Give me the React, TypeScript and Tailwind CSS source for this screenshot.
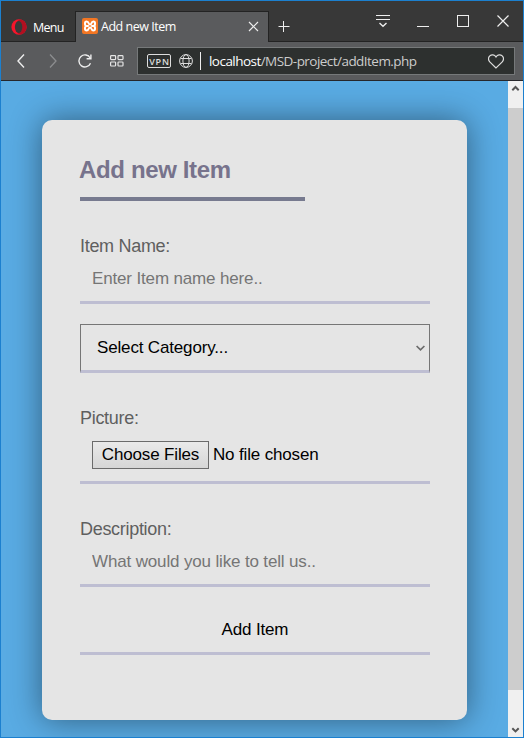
import React from "react";

const UI_FONT = "font-['Open_Sans','Noto_Sans',sans-serif]";

function OperaLogo() {
  return (
    <svg width="16" height="16" viewBox="0 0 16 16">
      <ellipse cx="8" cy="8" rx="7.6" ry="7.8" fill="#f5152b" />
      <path d="M6.500 2C8 .3 11 .3 12.800 2c3.600 3.200 3.600 8.800 0 12-2 1.700-4.800 1.700-6.300 0z" fill="#b30f20" />
      <ellipse cx="7.6" cy="8" rx="3.700" ry="6" fill="#383838" />
    </svg>
  );
}

function XamppIcon() {
  return (
    <svg width="16" height="16" viewBox="0 0 16 16">
      <rect width="16" height="16" rx="2" fill="#f37623" />
      <g fill="none" stroke="#fff" strokeWidth="2">
        <path d="M6.800 8H4.800C3.700 8 3 7.200 3 6V5.200C3 4 3.700 3.500 4.600 3.500c1.200 0 1.800.8 2.200 2 .5 1.400 2.100 1.400 2.500 0 .4-1.200 1-2 2.100-2 1 0 1.600.6 1.600 1.700V6c0 1.200-.7 2-1.800 2H9.200" />
        <path d="M4.800 8C3.700 8 3 8.800 3 10v.8c0 1.100.7 1.700 1.600 1.700 1.200 0 1.800-.8 2.200-2 .5-1.400 2.100-1.400 2.500 0 .4 1.200 1 2 2.100 2 1 0 1.600-.6 1.600-1.700V10c0-1.200-.7-2-1.800-2" />
      </g>
    </svg>
  );
}

function TitleBar() {
  return (
    <div className="flex h-[41px] shrink-0 bg-[#383838]">
      <div className="flex h-[41px] w-[74px] items-start border-b border-[#232323] pl-[10px] pt-[18px]">
        <OperaLogo />
        <span className="ml-[6px] text-[12.500px] leading-[18px] tracking-[-0.700px] text-white">Menu</span>
      </div>
      <div className="flex h-[31px] w-[194px] self-end border-x border-t border-[#232323] bg-[#5a5b5d] pl-[6px] pt-[6px]">
        <XamppIcon />
        <span className="ml-[3px] w-[147px] whitespace-nowrap text-[12.500px] leading-[17px] tracking-[-0.480px] text-white">Add new Item</span>
        <svg className="mt-[3px]" width="11" height="11" viewBox="0 0 11 11" fill="none" stroke="#eee" strokeWidth="1.200">
          <path d="M1 1l9 9M10 1l-9 9" />
        </svg>
      </div>
      <div className="flex h-[41px] grow border-b border-[#232323]">
        <svg className="ml-[9px] mt-[20px]" width="12" height="12" viewBox="0 0 12 12" fill="none" stroke="#eee">
          <path d="M.5 5.500h11M5.500 0v11" />
        </svg>
        <svg className="ml-[86px] mt-[13px]" width="14" height="14" viewBox="0 0 14 14" fill="none" stroke="#eee">
          <path d="M0 1.500h14M0 5.500h14" />
          <path d="M3.500 9L7 12.200 10.500 9" strokeWidth="1.400" />
        </svg>
        <svg className="ml-[27px] mt-[25px]" width="12" height="2" viewBox="0 0 12 2">
          <path d="M0 .5h12" stroke="#eee" />
        </svg>
        <svg className="ml-[28px] mt-[14px]" width="12" height="12" viewBox="0 0 12 12" fill="none" stroke="#eee">
          <rect x=".5" y=".5" width="11" height="11" />
        </svg>
        <svg className="ml-[28px] mt-[14px]" width="12" height="12" viewBox="0 0 12 12" fill="none" stroke="#eee" strokeWidth="1.200">
          <path d="M.5.5l11 11M11.500.5l-11 11" />
        </svg>
      </div>
    </div>
  );
}

function Toolbar() {
  return (
    <div className="flex h-[39px] shrink-0 items-center border-b border-[#26272b] bg-[#5a5b5d]">
      <svg className="ml-[16px]" width="8" height="14" viewBox="0 0 8 14" fill="none" stroke="#eee" strokeWidth="1.400">
        <path d="M7 .5L1 7l6 6.500" />
      </svg>
      <svg className="ml-[24px]" width="8" height="14" viewBox="0 0 8 14" fill="none" stroke="#8c8d8f" strokeWidth="1.300">
        <path d="M1 .5l6 6.500-6 6.500" />
      </svg>
      <svg className="ml-[21px]" width="15" height="14" viewBox="0 0 15 14" fill="none" stroke="#eee" strokeWidth="1.400">
        <path d="M12.500 9.200A6 6 0 1 1 12.200 4" />
        <path d="M12.900.5v4.300H8.600" />
      </svg>
      <svg className="ml-[17px]" width="14" height="12" viewBox="0 0 14 12" fill="none" stroke="#e5e5e5" strokeWidth="1.200">
        <rect x=".6" y=".6" width="5" height="4" rx=".8" />
        <rect x="8" y=".6" width="5" height="4" rx=".8" />
        <rect x=".6" y="7" width="5" height="4" rx=".8" />
        <rect x="8" y="7" width="5" height="4" rx=".8" />
      </svg>
      <div className="ml-[13px] flex h-[28px] w-[378px] items-center border border-[#76797a] bg-[#2d302f]">
        <span className="ml-[9px] flex h-[14px] w-[24px] items-center justify-center rounded-[2px] border border-[#ddd] text-[9px] font-semibold tracking-[0.800px] leading-none text-[#ddd]">
          <span className="ml-px">VPN</span>
        </span>
        <svg className="ml-[8px]" width="14" height="14" viewBox="0 0 14 14" fill="none" stroke="#ddd">
          <circle cx="7" cy="7" r="6.400" />
          <ellipse cx="7" cy="7" rx="3.100" ry="6.400" />
          <path d="M1.500 4.500h11M1.500 9.500h11" />
        </svg>
        <div className="ml-[7px] h-[18px] w-px bg-[#eee]" />
        <span className="ml-[8px] w-[278px] whitespace-nowrap text-[13.500px] tracking-[-0.540px] text-[#ccc]">
          <span className="text-white">localhost</span>/MSD-project/addItem.php
        </span>
        <svg className="ml-px shrink-0" width="16" height="15" viewBox="0 0 16 15" fill="none" stroke="#ddd" strokeWidth="1.200">
          <path d="M8 14L2 8.200C.2 6.200.3 3.500 1.800 1.900 3.600.2 6.500.4 8 3c1.500-2.600 4.400-2.800 6.200-1.100C15.700 3.500 15.800 6.200 14 8.200z" />
        </svg>
      </div>
    </div>
  );
}

function Label({ children }: { children: React.ReactNode }) {
  return <label className="mt-[33px] block h-6 text-[18px] leading-6 tracking-[-0.300px] text-[#5f5f5f]">{children}</label>;
}

function TextField({ placeholder }: { placeholder: string }) {
  return (
    <input
      type="text"
      placeholder={placeholder}
      className="block h-[46px] w-full border-b-[3px] border-[#bebed2] bg-transparent px-3 pb-[10px] pt-[9px] text-[17px] leading-6 tracking-[-0.150px] outline-none placeholder:text-[#757575]"
    />
  );
}

function ItemForm() {
  return (
    <form className="ml-[41px] mt-[39px] h-[600px] w-[425px] shrink-0 rounded-[10px] bg-[#e5e5e5] pl-[38px] pr-[37px] pt-[35px] shadow-[0_0_32px_rgba(0,0,0,0.45)]">
      <h1 className="h-[46px] w-[225px] whitespace-nowrap border-b-4 border-[#777a8f] text-[24px] font-bold leading-[30px] tracking-[-0.360px] text-[#77738c]">
        <span className="-ml-px">Add new Item</span>
      </h1>
      <Label>Item Name:</Label>
      <TextField placeholder="Enter Item name here.." />
      <div className="mt-5 flex h-[49px] justify-between border border-b-[3px] border-[#767676] border-b-[#bebed2] pl-4 pr-1 pt-[11px] text-[17px] leading-6 tracking-[-0.160px] text-black">
        <span>Select Category...</span>
        <svg className="mt-[9px]" width="9" height="7" viewBox="0 0 9 7" fill="none" stroke="#6b6b6b" strokeWidth="1.700">
          <path d="M.6 1l3.900 3.800L8.400 1" />
        </svg>
      </div>
      <Label>Picture:</Label>
      <div className="flex h-[54px] border-b-[3px] border-[#bebed2] pl-3 pt-[11px] text-[17px] tracking-[-0.160px] text-black">
        <button type="button" className="h-[28px] w-[117px] whitespace-nowrap border border-[#6b6b6b] bg-linear-to-b from-[#eaeaea] to-[#d6d6d6] leading-[24px]">
          Choose Files
        </button>
        <span className="ml-1 mt-[2px] leading-6">No file chosen</span>
      </div>
      <Label>Description:</Label>
      <TextField placeholder="What would you like to tell us.." />
      <button type="button" className="mt-5 block h-[48px] w-full border-b-[3px] border-[#bebed2] pb-[10px] pt-[11px] text-[17px] leading-6 tracking-[-0.160px] text-black">
        Add Item
      </button>
    </form>
  );
}

function Scrollbar() {
  return (
    <div className="flex w-[15px] flex-col bg-[#f0f0f0]">
      <svg width="15" height="27" viewBox="0 0 15 27" fill="none" stroke="#555" strokeWidth="2">
        <path d="M4.300 9.200l3.200-3.200 3.200 3.200" />
      </svg>
      <div className="h-[582px] bg-[#cdcdcd]" />
      <svg className="mt-[32px]" width="15" height="15" viewBox="0 0 15 15" fill="none" stroke="#555" strokeWidth="2">
        <path d="M4.300 6.200l3.200 3.200 3.200-3.200" />
      </svg>
    </div>
  );
}

export default function App() {
  return (
    <div className={`flex h-[738px] w-[524px] flex-col overflow-hidden border border-[#1c80cf] ${UI_FONT}`}>
      <TitleBar />
      <Toolbar />
      <div className="flex min-h-0 grow">
        <main className="grow overflow-hidden bg-[#59abe3] font-['Liberation_Sans',Arial,sans-serif]">
          <div className="flex">
            <ItemForm />
          </div>
        </main>
        <Scrollbar />
      </div>
    </div>
  );
}
